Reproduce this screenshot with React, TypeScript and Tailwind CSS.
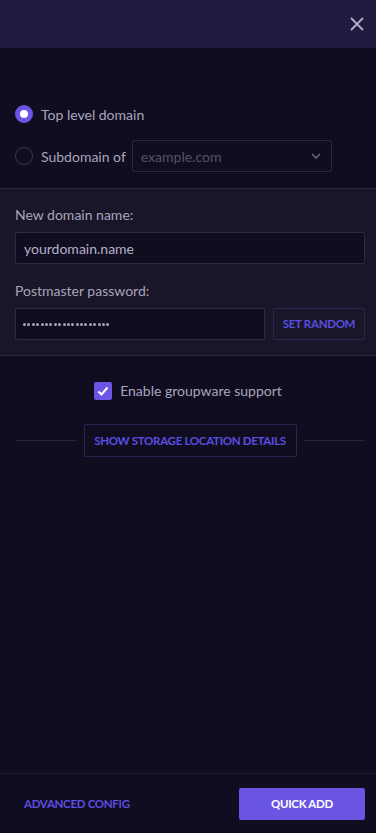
import React from "react";

export default function App() {
  const font = { fontFamily: '"Source Sans Pro", "Lato", "Noto Sans", sans-serif' };
  const btn = "text-[11.5px] font-bold tracking-[-0.3px] text-[#5b4ee0] whitespace-nowrap";
  return (
    <div className="w-[376px] h-[833px] bg-[#100d21] flex flex-col text-[#a8a5bb]" style={font}>
      <div className="h-[48px] bg-[#1f1b41] flex items-center justify-end pr-[11px] shrink-0">
        <svg width="16" height="16" viewBox="0 0 16 16" className="text-[#b0aec4]">
          <path d="M2 2 L14 14 M14 2 L2 14" stroke="currentColor" strokeWidth="1.8" />
        </svg>
      </div>
      <div className="flex flex-col gap-[10px] pl-[15px] pr-[11px] pt-[50px] pb-[16px]">
        <div className="flex items-center h-[32px]">
          <span className="w-[18px] h-[18px] rounded-full bg-[#6b55e6] flex items-center justify-center">
            <span className="w-[8px] h-[8px] rounded-full bg-white" />
          </span>
          <span className="ml-[8px] text-[14px]">Top level domain</span>
        </div>
        <div className="flex items-center h-[32px]">
          <span className="w-[18px] h-[18px] rounded-full border border-[#3a3750]" />
          <span className="ml-[8px] text-[14px]">Subdomain of</span>
          <div className="ml-[6px] w-[200px] h-[32px] border border-[#2a2740] rounded-[2px] flex items-center justify-between pl-[8px] pr-[10px]">
            <span className="text-[14px] text-[#555267]">example.com</span>
            <svg width="10" height="6" viewBox="0 0 10 6">
              <path d="M1 1 L5 5 L9 1" stroke="#6a6880" strokeWidth="1.6" fill="none" />
            </svg>
          </div>
        </div>
      </div>
      <div className="bg-[#181628] border-y border-[#2a2840] pl-[15px] pr-[11px] pt-[16px] pb-[15px] flex flex-col">
        <div className="text-[14px] leading-[20px]">New domain name:</div>
        <div className="mt-[7px] h-[32px] border border-[#2d2a42] bg-[#100d21] rounded-[2px] flex items-center px-[8px] text-[14px] text-[#b4b1c6]">
          yourdomain.name
        </div>
        <div className="mt-[17px] text-[14px] leading-[20px]">Postmaster password:</div>
        <div className="mt-[7px] flex gap-[8px]">
          <div className="flex-1 h-[32px] border border-[#2d2a42] bg-[#100d21] rounded-[2px] flex items-center px-[7px]">
            <span className="flex gap-[1.4px]">
              {Array.from({ length: 20 }).map((_, i) => (
                <span key={i} className="w-[3px] h-[3px] rounded-full bg-[#a8a5bb]" />
              ))}
            </span>
          </div>
          <div className={"w-[92px] h-[32px] border border-[#2a2650] rounded-[2px] flex items-center justify-center " + btn}>
            SET RANDOM
          </div>
        </div>
      </div>
      <div className="flex items-center justify-center mt-[24px]">
        <span className="w-[18px] h-[18px] rounded-[2px] bg-[#6b55e6] flex items-center justify-center">
          <svg width="12" height="10" viewBox="0 0 12 10">
            <path d="M1.5 5.5 L4.5 8.5 L10.5 1.5" stroke="white" strokeWidth="2" fill="none" />
          </svg>
        </span>
        <span className="ml-[8px] text-[14px]">Enable groupware support</span>
      </div>
      <div className="flex items-center pl-[15px] pr-[11px] mt-[23px]">
        <div className="flex-1 h-px bg-[#27243a]" />
        <div className={"mx-[7px] w-[213px] h-[33px] border border-[#2a2650] rounded-[2px] flex items-center justify-center " + btn}>
          SHOW STORAGE LOCATION DETAILS
        </div>
        <div className="flex-1 h-px bg-[#27243a]" />
      </div>
      <div className="flex-1" />
      <div className="border-t border-[#1f1c33] h-[60px] flex items-center justify-between pl-[24px] pr-[11px] shrink-0">
        <span className={btn}>ADVANCED CONFIG</span>
        <div className="w-[126px] h-[32px] bg-[#6a55e2] rounded-[2px] flex items-center justify-center text-[11.5px] font-bold tracking-[-0.3px] text-white">
          QUICK ADD
        </div>
      </div>
    </div>
  );
}
